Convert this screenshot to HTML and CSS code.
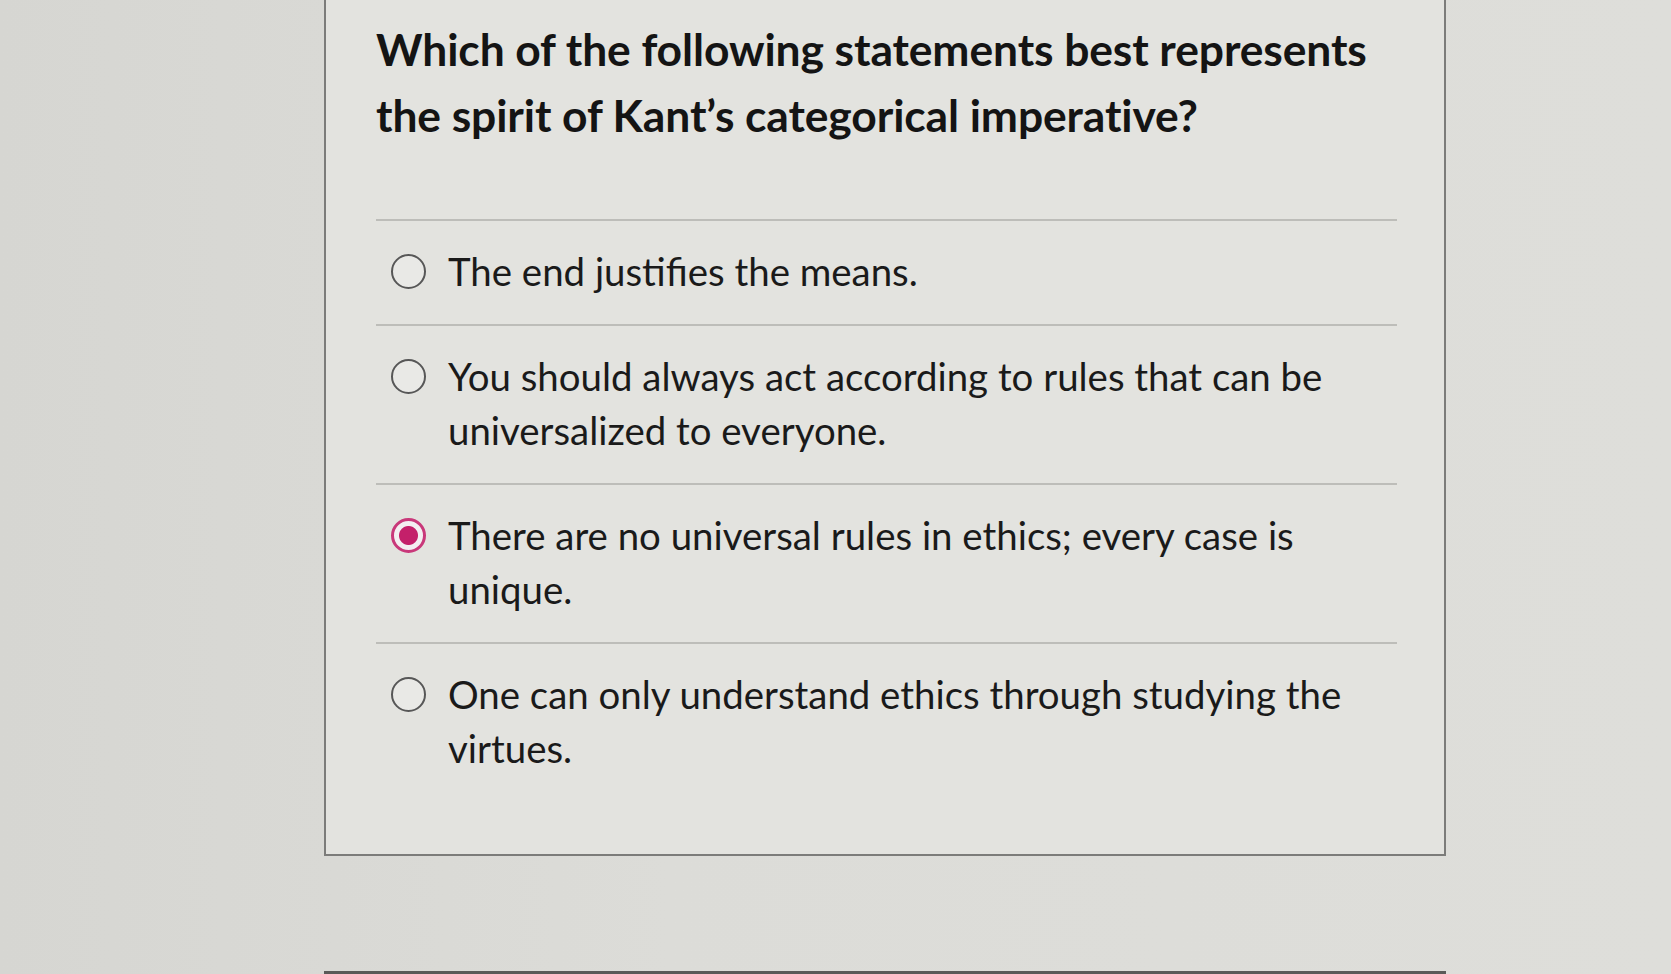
FILE: index.html
```html
<!DOCTYPE html>
<html lang="en">
<head>
<meta charset="utf-8">
<title>Quiz question</title>
<link rel="stylesheet" href="styles.css">
</head>
<body>
<div class="page">
  <section class="card">
    <h1 class="question">Which of the following statements best represents the spirit of Kant’s categorical imperative?</h1>
    <ul class="answers">
      <li class="answer">
        <span class="radio"></span>
        <span class="label">The end justifies the means.</span>
      </li>
      <li class="answer">
        <span class="radio"></span>
        <span class="label">You should always act according to rules that can be universalized to everyone.</span>
      </li>
      <li class="answer">
        <span class="radio checked"></span>
        <span class="label">There are no universal rules in ethics; every case is unique.</span>
      </li>
      <li class="answer">
        <span class="radio"></span>
        <span class="label">One can only understand ethics through studying the virtues.</span>
      </li>
    </ul>
  </section>
  <section class="card next"></section>
</div>
</body>
</html>
```

FILE: styles.css
```css
html, body {
  margin: 0;
  padding: 0;
  height: 100%;
  overflow: hidden;
}
body {
  background: linear-gradient(90deg, #d6d6d2 0%, #dcdcd8 40%, #dededa 100%);
  font-family: Lato, "Open Sans", sans-serif;
  color: #1a1a1a;
}
.page {
  display: flex;
  flex-direction: column;
  padding-left: 324px;
  width: 1122px;
}
.card {
  background: #e3e3df;
  border: 2px solid #7c7c7a;
  border-top: none;
  box-sizing: border-box;
  height: 856px;
  padding: 16px 47px 0 50px;
}
.card.next {
  margin-top: 115px;
  height: 40px;
  border: none;
  border-top: 3px solid #5a5a58;
  padding: 0;
}
.question {
  margin: 0;
  font-size: 44.4px;
  font-weight: 700;
  line-height: 66px;
  letter-spacing: -0.1px;
  color: #141414;
}
.answers {
  list-style: none;
  margin: 71px 0 0 0;
  padding: 0;
  border-top: 2px solid #bdbdb9;
}
.answer {
  display: flex;
  align-items: flex-start;
  gap: 22px;
  padding: 23px 40px 26px 15px;
  border-bottom: 2px solid #bdbdb9;
  font-size: 38.4px;
  line-height: 54px;
}
.answer:last-child {
  border-bottom: none;
}
.radio {
  flex: none;
  width: 35px;
  height: 35px;
  margin-top: 10px;
  border: 2px solid #575757;
  border-radius: 50%;
  background: #e9e9e6;
  box-sizing: border-box;
}
.radio.checked {
  border: 3px solid #c9387a;
  background: radial-gradient(circle, #c4206a 0, #c4206a 9px, #f3eef1 10px);
}
.label {
  flex: 1;
}
```
